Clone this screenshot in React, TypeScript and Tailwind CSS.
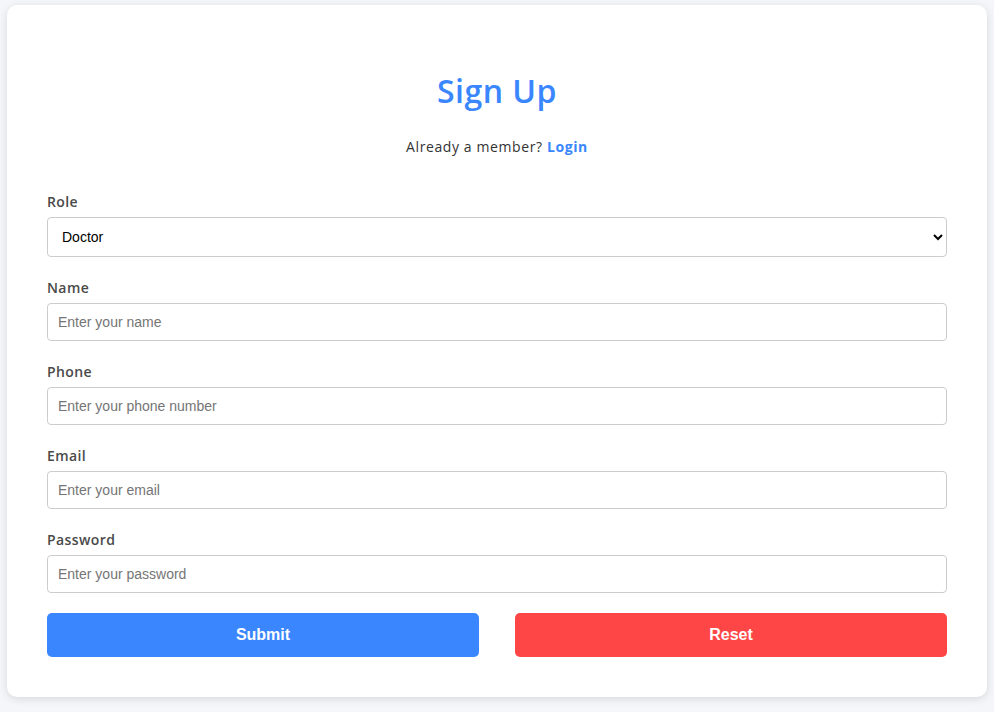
import { useState } from 'react'

const FIELDS = [
  { name: 'name', label: 'Name', type: 'text', placeholder: 'Enter your name' },
  { name: 'phone', label: 'Phone', type: 'tel', placeholder: 'Enter your phone number' },
  { name: 'email', label: 'Email', type: 'email', placeholder: 'Enter your email' },
  { name: 'password', label: 'Password', type: 'password', placeholder: 'Enter your password' },
]

const HEAD_FONT = "font-['Open_Sans',sans-serif]"
const INPUT_FONT = "font-['Liberation_Sans',Arial,sans-serif]"

export default function App() {
  const [role, setRole] = useState('Doctor')
  const [values, setValues] = useState<Record<string, string>>({})

  const reset = () => {
    setRole('Doctor')
    setValues({})
  }

  return (
    <div className="min-h-screen bg-[#f5f6fa] px-[7px] pt-[5px] pb-[15px]">
      <div className={`bg-white rounded-[10px] shadow-[0_2px_8px_rgba(0,0,0,0.12)] px-10 pb-10 pt-[41px] ${HEAD_FONT}`}>
        <h1 className="mt-[21px] text-center text-[32px] leading-[48px] font-semibold tracking-[0.5px] text-[#3a86ff]">
          Sign Up
        </h1>
        <p className="mt-[21px] text-center text-[14px] leading-[21px] tracking-[0.6px] text-[#333]">
          Already a member?{' '}
          <a href="#" className="font-bold text-[#3a86ff]">
            Login
          </a>
        </p>

        <form className="mt-[34px]" onSubmit={(e) => e.preventDefault()}>
          <div className="mb-5">
            <label className="block mb-[5px] text-[14px] leading-[21px] font-semibold tracking-[0.4px] text-[#4a4a4a]">Role</label>
            <select
              value={role}
              onChange={(e) => setRole(e.target.value)}
              className={`w-full h-10 px-2.5 border border-[#ccc] rounded-[4px] bg-white text-[14px] text-black outline-none ${INPUT_FONT}`}
            >
              <option>Doctor</option>
              <option>Patient</option>
              <option>Admin</option>
            </select>
          </div>

          {FIELDS.map((f) => (
            <div key={f.name} className="mb-5">
              <label className="block mb-[5px] text-[14px] leading-[21px] font-semibold tracking-[0.4px] text-[#4a4a4a]">{f.label}</label>
              <input
                type={f.type}
                placeholder={f.placeholder}
                value={values[f.name] ?? ''}
                onChange={(e) => setValues({ ...values, [f.name]: e.target.value })}
                className={`w-full h-[38px] px-2.5 border border-[#ccc] rounded-[4px] text-[14px] text-black placeholder:text-[#757575] outline-none ${INPUT_FONT}`}
              />
            </div>
          ))}

          <div className="flex gap-9">
            <button
              type="submit"
              className={`flex-1 h-11 rounded-[5px] bg-[#3a86ff] text-white text-[16px] font-bold ${INPUT_FONT}`}
            >
              Submit
            </button>
            <button
              type="button"
              onClick={reset}
              className={`flex-1 h-11 rounded-[5px] bg-[#ff4646] text-white text-[16px] font-bold ${INPUT_FONT}`}
            >
              Reset
            </button>
          </div>
        </form>
      </div>
    </div>
  )
}
